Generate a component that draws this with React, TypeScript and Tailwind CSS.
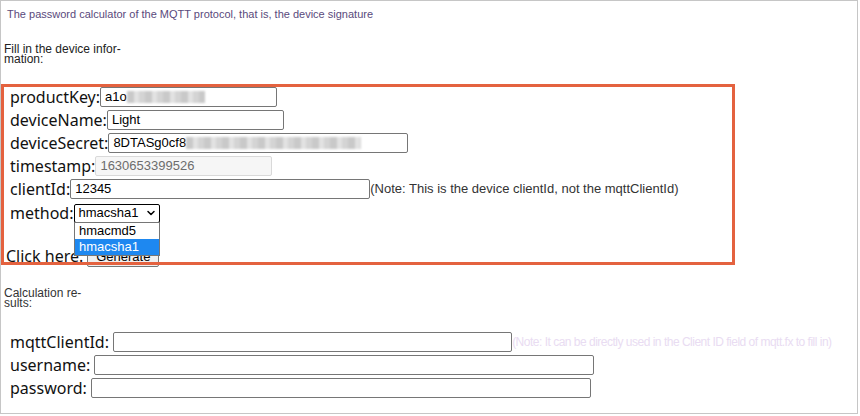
import React from 'react';
import { ChevronDown } from 'lucide-react';

const label = 'shrink-0 text-[16px] text-[#111] leading-none';
const box = 'shrink-0 h-[20px] border border-[#767676] rounded-[2px] bg-white flex items-center px-[4px] text-[13px] text-black font-["Liberation_Sans",Arial,sans-serif] overflow-hidden whitespace-nowrap';

function Blur({ w }: { w: number }) {
  return (
    <span
      className="inline-block h-[12px] bg-[repeating-linear-gradient(90deg,#c9c9c9_0px,#c9c9c9_7px,#e2e2e2_7px,#e2e2e2_12px,#d4d4d4_12px,#d4d4d4_18px)] blur-[1px]"
      style={{ width: w }}
    />
  );
}

export default function App() {
  return (
    <div className='relative w-[860px] h-[416px] bg-white font-["Noto_Sans",sans-serif]'>
      <div className="w-[858px] h-[414px] border border-[#c6c6c6]">
        <div className='pt-[6px] pl-[6px] text-[11px] leading-[14px] text-[#5a4a7c] font-["Liberation_Sans",Arial,sans-serif]'>
          The password calculator of the MQTT protocol, that is, the device signature
        </div>

        <div className='mt-[23px] pl-[3px] w-[140px] text-[12px] leading-[10px] text-[#222] font-["Liberation_Sans",Arial,sans-serif]'>
          Fill in the device infor-
          <br />
          mation:
        </div>

        <div className="mt-[23px] pl-[9px] flex flex-col gap-[3px]">
          <div className="flex items-center h-[20px]">
            <span className={label}>productKey:</span>
            <div className={`${box} w-[177px]`}>
              a1o<Blur w={78} />
            </div>
          </div>
          <div className="flex items-center h-[20px]">
            <span className={label}>deviceName:</span>
            <div className={`${box} w-[177px]`}>Light</div>
          </div>
          <div className="flex items-center h-[20px]">
            <span className={label}>deviceSecret:</span>
            <div className={`${box} w-[300px]`}>
              8DTASg0cf8<Blur w={175} />
            </div>
          </div>
          <div className="flex items-center h-[20px]">
            <span className={label}>timestamp:</span>
            <div className={`${box} w-[177px] !bg-[#f6f6f6] !border-[#d9d9d9] !text-[#6d6d6d]`}>1630653399526</div>
          </div>
          <div className="flex items-center h-[20px]">
            <span className={label}>clientId:</span>
            <div className={`${box} w-[300px]`}>12345</div>
            <span className='whitespace-nowrap text-[13px] text-[#333] font-["Liberation_Sans",Arial,sans-serif]'>
              (Note: This is the device clientId, not the mqttClientId)
            </span>
          </div>
          <div className="relative flex items-center h-[20px] mt-[1px]">
            <span className={label}>method:</span>
            <div className='ml-[1px] w-[86px] h-[19px] border border-black rounded-[2px] flex items-center justify-between pl-[3px] pr-[2px] text-[13px] font-["Liberation_Sans",Arial,sans-serif]'>
              hmacsha1
              <ChevronDown size={12} strokeWidth={3} />
            </div>
            <div className='absolute z-10 left-[64px] top-[19px] w-[86px] border border-[#767676] bg-white text-[13px] leading-[16px] font-["Liberation_Sans",Arial,sans-serif]'>
              <div className="px-[4px] h-[16px] text-black">hmacmd5</div>
              <div className="px-[4px] h-[16px] bg-[#1e88f0] text-white">hmacsha1</div>
            </div>
          </div>
        </div>

        <div className="mt-[22px] pl-[5px] flex items-center h-[22px]">
          <span className={label}>Click here:</span>
          <button className='ml-[4px] w-[72px] h-[21px] border border-[#767676] rounded-[2px] bg-[#efefef] text-[13px] font-["Liberation_Sans",Arial,sans-serif]'>
            Generate
          </button>
        </div>

        <div className='mt-[21px] pl-[3px] w-[140px] text-[12px] leading-[10px] text-[#333] font-["Liberation_Sans",Arial,sans-serif]'>
          Calculation re-
          <br />
          sults:
        </div>

        <div className="mt-[24px] pl-[9px] flex flex-col gap-[3px]">
          <div className="flex items-center h-[20px]">
            <span className={label}>mqttClientId:&nbsp;</span>
            <div className={`${box} w-[399px]`}></div>
            <span className='whitespace-nowrap text-[12px] tracking-[-0.5px] text-[#e9dcf2] font-["Liberation_Sans",Arial,sans-serif]'>
              (Note: It can be directly used in the Client ID field of mqtt.fx to fill in)
            </span>
          </div>
          <div className="flex items-center h-[20px]">
            <span className={label}>username:&nbsp;</span>
            <div className={`${box} w-[500px]`}></div>
          </div>
          <div className="flex items-center h-[20px]">
            <span className={label}>password:&nbsp;</span>
            <div className={`${box} w-[500px]`}></div>
          </div>
        </div>
      </div>

      <div className="absolute left-[1px] top-[84px] w-[734px] h-[181px] border-[3px] border-[#e4623f] pointer-events-none" />
    </div>
  );
}
